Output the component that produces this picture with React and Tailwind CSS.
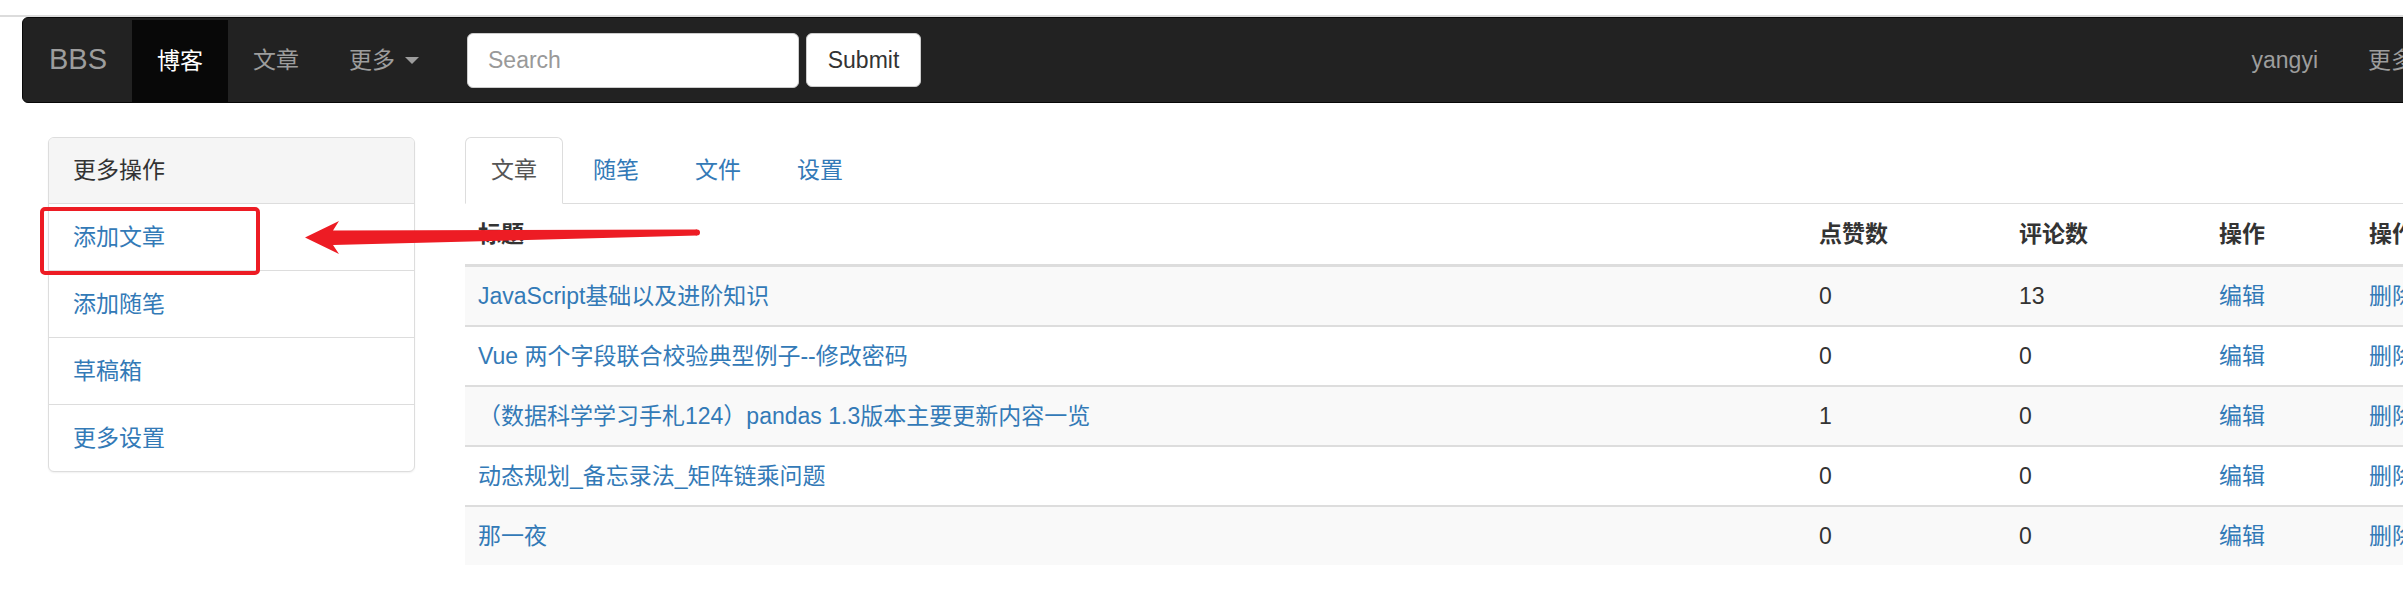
import React from 'react'

const font = { fontFamily: '"Liberation Sans", "Noto Sans CJK SC", sans-serif' }

const posts = [
    { title: 'JavaScript基础以及进阶知识', up: 0, comments: 13 },
    { title: 'Vue 两个字段联合校验典型例子--修改密码', up: 0, comments: 0 },
    { title: '（数据科学学习手札124）pandas 1.3版本主要更新内容一览', up: 1, comments: 0 },
    { title: '动态规划_备忘录法_矩阵链乘问题', up: 0, comments: 0 },
    { title: '那一夜', up: 0, comments: 0 },
]

function Caret() {
    return <span className="inline-block ml-[10px] w-0 h-0 border-l-[7px] border-r-[7px] border-t-[7px] border-l-transparent border-r-transparent border-t-[#9d9d9d] align-middle" />
}

function Navbar() {
    return (
        <nav className="ml-[22px] w-[2442px] h-[86px] bg-[#222] border border-[#080808] rounded-[6px] flex items-stretch justify-between">
            <div className="flex items-stretch">
                <a className="pl-[26px] pr-[25px] flex items-center text-[29px] text-[#9d9d9d]">BBS</a>
                <ul className="flex items-stretch">
                    <li className="mt-[2px] h-[82px] px-[25px] flex items-center bg-[#080808] text-white text-[23px]">博客</li>
                    <li className="px-[25px] flex items-center text-[#9d9d9d] text-[23px]">文章</li>
                    <li className="px-[25px] flex items-center text-[#9d9d9d] text-[23px]">更多<Caret /></li>
                </ul>
                <form className="ml-[23px] flex items-center gap-[7px]">
                    <input
                        type="text"
                        placeholder="Search"
                        className="w-[332px] h-[55px] rounded-[6px] border border-[#ccc] bg-white px-[20px] text-[23px] text-[#555] placeholder:text-[#999] outline-none"
                        style={font}
                    />
                    <button type="button" className="w-[115px] h-[54px] rounded-[6px] border border-[#ccc] bg-white text-[23px] text-[#333]" style={font}>
                        Submit
                    </button>
                </form>
            </div>
            <ul className="flex items-stretch">
                <li className="px-[25px] flex items-center text-[#9d9d9d] text-[23px]">yangyi</li>
                <li className="px-[25px] flex items-center text-[#9d9d9d] text-[23px]">更多<Caret /></li>
            </ul>
        </nav>
    )
}

function Sidebar() {
    const items = ['添加文章', '添加随笔', '草稿箱', '更多设置']
    return (
        <div className="ml-[48px] w-[367px] shrink-0 self-start border border-[#ddd] rounded-[6px] bg-white shadow-[0_1px_2px_rgba(0,0,0,0.06)] overflow-hidden">
            <div className="h-[66px] px-[24px] flex items-center bg-[#f5f5f5] border-b border-[#ddd] text-[23px] text-[#333]">更多操作</div>
            {items.map((t, i) => (
                <div key={t} className={`h-[66px] px-[24px] flex items-center text-[23px] text-[#337ab7] ${i > 0 ? 'border-t border-[#ddd] box-content' : ''}`}>{t}</div>
            ))}
        </div>
    )
}

function Tabs() {
    const tabs = ['文章', '随笔', '文件', '设置']
    return (
        <ul className="flex h-[67px] border-b border-[#ddd]">
            {tabs.map((t, i) => (
                <li key={t} className={`mr-[4px] -mb-px h-[67px] px-[25px] flex items-center text-[23px] rounded-t-[6px] border ${i === 0 ? 'bg-white border-[#ddd] border-b-transparent text-[#555]' : 'border-transparent text-[#337ab7]'}`}>{t}</li>
            ))}
        </ul>
    )
}

function PostTable() {
    return (
        <table className="w-[2050px] table-fixed border-separate border-spacing-0 text-[23px] leading-[33px] text-[#333]">
            <colgroup>
                <col className="w-[1341px]" />
                <col className="w-[200px]" />
                <col className="w-[200px]" />
                <col className="w-[150px]" />
                <col />
            </colgroup>
            <thead>
                <tr>
                    {['标题', '点赞数', '评论数', '操作', '操作'].map((h, i) => (
                        <th key={i} className="h-[63px] px-[13px] text-left font-bold border-b-[3px] border-[#ddd]">{h}</th>
                    ))}
                </tr>
            </thead>
            <tbody>
                {posts.map((p, i) => {
                    const cell = `px-[13px] ${i > 0 ? 'h-[60px] border-t-2 border-[#ddd]' : 'h-[58px]'} ${i % 2 === 0 ? 'bg-[#f9f9f9]' : 'bg-white'}`
                    return (
                        <tr key={p.title}>
                            <td className={`${cell} text-[#337ab7] whitespace-nowrap`}>{p.title}</td>
                            <td className={cell}>{p.up}</td>
                            <td className={cell}>{p.comments}</td>
                            <td className={`${cell} text-[#337ab7]`}>编辑</td>
                            <td className={`${cell} text-[#337ab7]`}>删除</td>
                        </tr>
                    )
                })}
            </tbody>
        </table>
    )
}

function Annotation() {
    return (
        <svg className="absolute left-0 top-0 pointer-events-none" width="2403" height="614">
            <rect x="42" y="209" width="216" height="64" rx="3" fill="none" stroke="#ed1c24" strokeWidth="4" />
            <polygon
                fill="#ed1c24"
                points="305,237.5 339,221 333,230.5 697,229.5 697,235.5 333,245 339,254"
            />
            <circle cx="697" cy="232.5" r="3" fill="#ed1c24" />
        </svg>
    )
}

export default function App() {
    return (
        <div className="relative w-[2403px] h-[614px] overflow-hidden bg-white" style={font}>
            <div className="h-[15px]" />
            <div className="h-[2px] bg-[#dcdcdc]" />
            <Navbar />
            <div className="mt-[34px] flex items-start">
                <Sidebar />
                <div className="ml-[50px] w-[2050px] shrink-0">
                    <Tabs />
                    <PostTable />
                </div>
            </div>
            <Annotation />
        </div>
    )
}
